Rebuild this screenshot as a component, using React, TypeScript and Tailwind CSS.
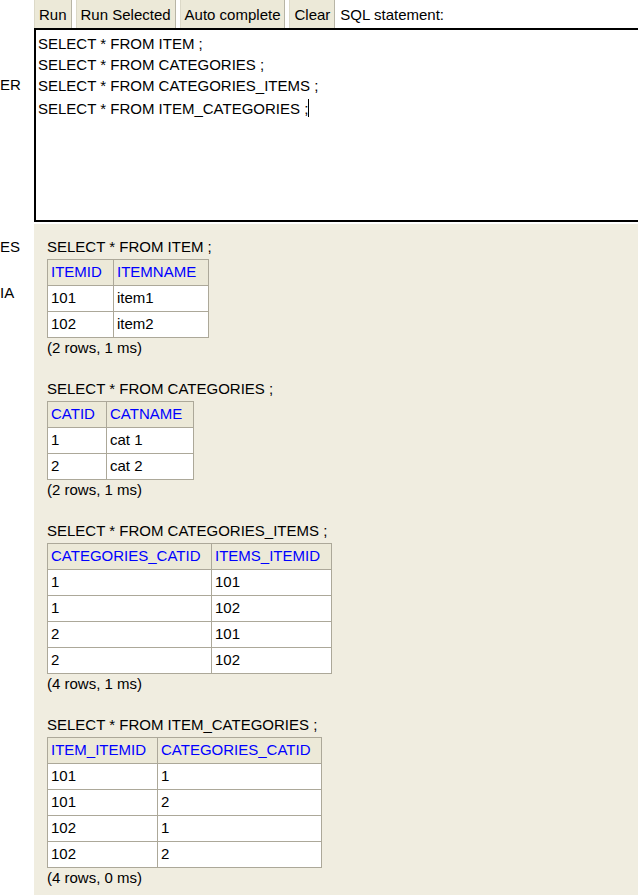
import React from "react";

type Result = {
    sql: string;
    cols: { name: string; w: string }[];
    rows: string[][];
    width: string;
    summary: string;
};

const results: Result[] = [
    {
        sql: "SELECT * FROM ITEM ;",
        cols: [
            { name: "ITEMID", w: "w-[66px]" },
            { name: "ITEMNAME", w: "w-[95px]" },
        ],
        rows: [
            ["101", "item1"],
            ["102", "item2"],
        ],
        width: "w-[161px]",
        summary: "(2 rows, 1 ms)",
    },
    {
        sql: "SELECT * FROM CATEGORIES ;",
        cols: [
            { name: "CATID", w: "w-[59px]" },
            { name: "CATNAME", w: "w-[87px]" },
        ],
        rows: [
            ["1", "cat 1"],
            ["2", "cat 2"],
        ],
        width: "w-[146px]",
        summary: "(2 rows, 1 ms)",
    },
    {
        sql: "SELECT * FROM CATEGORIES_ITEMS ;",
        cols: [
            { name: "CATEGORIES_CATID", w: "w-[164px]" },
            { name: "ITEMS_ITEMID", w: "w-[120px]" },
        ],
        rows: [
            ["1", "101"],
            ["1", "102"],
            ["2", "101"],
            ["2", "102"],
        ],
        width: "w-[284px]",
        summary: "(4 rows, 1 ms)",
    },
    {
        sql: "SELECT * FROM ITEM_CATEGORIES ;",
        cols: [
            { name: "ITEM_ITEMID", w: "w-[110px]" },
            { name: "CATEGORIES_CATID", w: "w-[164px]" },
        ],
        rows: [
            ["101", "1"],
            ["101", "2"],
            ["102", "1"],
            ["102", "2"],
        ],
        width: "w-[274px]",
        summary: "(4 rows, 0 ms)",
    },
];

const buttons = ["Run", "Run Selected", "Auto complete", "Clear"];

function ResultBlock({ r }: { r: Result }) {
    return (
        <div className="mb-[21px]">
            <div className="h-[20px] leading-[20px]">{r.sql}</div>
            <table className={`mt-[2px] border-collapse table-fixed ${r.width}`}>
                <thead>
                    <tr className="h-[26px] bg-[#ece9d8]">
                        {r.cols.map((c) => (
                            <th
                                key={c.name}
                                className={`${c.w} border border-[#aca899] pl-[3px] text-left font-normal text-[#0000ff]`}
                            >
                                {c.name}
                            </th>
                        ))}
                    </tr>
                </thead>
                <tbody>
                    {r.rows.map((row, i) => (
                        <tr key={i} className="h-[26px] bg-white">
                            {row.map((v, j) => (
                                <td key={j} className="border border-[#aca899] pl-[3px]">
                                    {v}
                                </td>
                            ))}
                        </tr>
                    ))}
                </tbody>
            </table>
            <div className="h-[20px] leading-[20px]">{r.summary}</div>
        </div>
    );
}

export default function App() {
    return (
        <div className="flex h-[895px] w-[638px] overflow-hidden bg-white font-['Liberation_Sans',Arial,sans-serif] text-[15px] text-black">
            {/* clipped left frame */}
            <div className="flex w-[34px] shrink-0 flex-col pt-[75px] leading-[20px]">
                <div>ER</div>
                <div className="mt-[142px]">ES</div>
                <div className="mt-[26px]">IA</div>
            </div>

            <div className="flex min-w-0 flex-1 flex-col">
                <div className="flex h-[28px] shrink-0 items-stretch gap-[4px]">
                    {buttons.map((b) => (
                        <div
                            key={b}
                            className="flex items-center border-l border-r border-l-[#dcd9c8] border-r-[#b8b5a6] bg-[#ece9d8] px-[4px] leading-none"
                        >
                            {b}
                        </div>
                    ))}
                    <div className="ml-[1px] flex items-center leading-none">SQL statement:</div>
                </div>

                <div className="h-[194px] w-[700px] shrink-0 border-y-2 border-l-2 border-black pl-[2px] pt-[3px] leading-[21px]">
                    <div>SELECT * FROM ITEM ;</div>
                    <div>SELECT * FROM CATEGORIES ;</div>
                    <div>SELECT * FROM CATEGORIES_ITEMS ;</div>
                    <div>
                        SELECT * FROM ITEM_CATEGORIES ;
                        <span className="inline-block h-[18px] w-px translate-y-[3px] bg-black" />
                    </div>
                </div>

                <div className="mt-[2px] flex-1 bg-[#f0ede0] pl-[13px] pt-[13px]">
                    {results.map((r) => (
                        <ResultBlock key={r.sql} r={r} />
                    ))}
                </div>
            </div>
        </div>
    );
}
